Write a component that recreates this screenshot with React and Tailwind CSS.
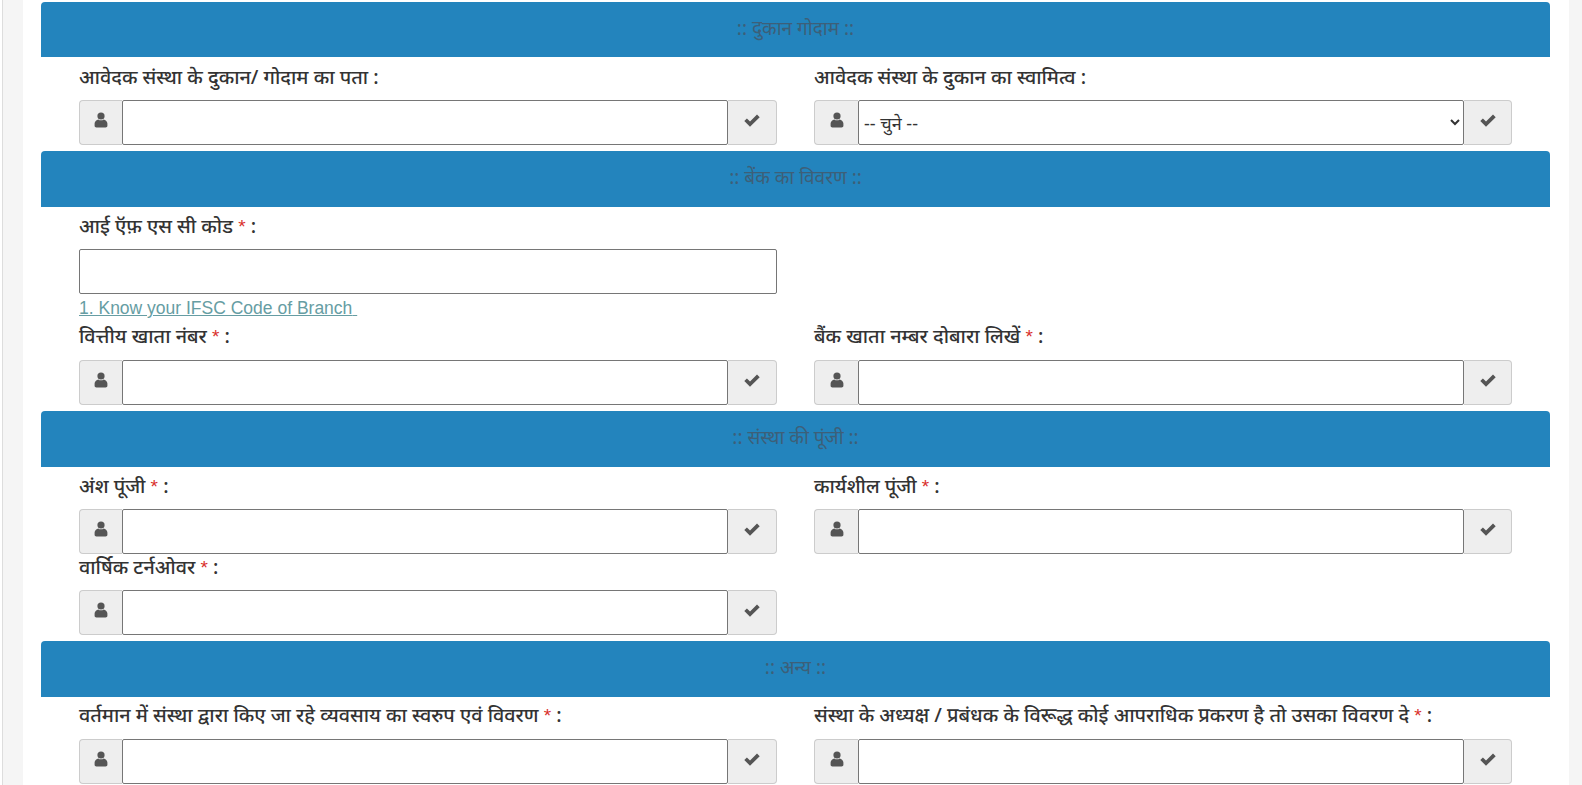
import { useState } from "react";

const deva = "font-['Noto_Sans','Noto_Sans_Devanagari','Lohit_Devanagari',sans-serif]";

function UserIcon() {
  return (
    <svg viewBox="0 0 14 16" className="w-[14px] h-[16px] -mt-[5px] fill-[#555]">
      <circle cx="7" cy="4" r="3.6" />
      <path d="M4.6 7.4 C5.4 8.6 8.6 8.6 9.4 7.4 C11.8 7.8 13.4 9.4 13.4 11.6 L13.4 14 C13.4 14.8 12.6 15.4 11.6 15.4 L2.4 15.4 C1.4 15.4 .6 14.8 .6 14 L.6 11.6 C.6 9.4 2.2 7.8 4.6 7.4 Z" />
    </svg>
  );
}

function CheckIcon() {
  return (
    <svg viewBox="0 0 16 13" className="w-[16px] h-[13px] -mt-[4px] fill-[#555]">
      <path d="M0.3 7 L2.9 4.4 L6 7.5 L13 0.6 L15.7 3.2 L6 12.8 Z" />
    </svg>
  );
}

function SectionHead({ title, first }) {
  return (
    <div className={`${first ? "h-[55px]" : "h-[56px]"} bg-[#2384bd] rounded-t-[4px] flex items-center justify-center pb-[3px] text-[19px] text-[#3d5f78]`}>
      :: {title} ::
    </div>
  );
}

function Label({ text, req }) {
  return (
    <div className="text-[19.8px] font-medium text-[#333] leading-[24px] whitespace-nowrap">
      {text} {req && <span className="text-[19px] text-[#d9302c] font-['Liberation_Sans',sans-serif]">*</span>} :
    </div>
  );
}

function Group({ select, right }) {
  const [val, setVal] = useState("");
  return (
    <div className="flex h-[45px]">
      <span className={`${right ? "w-[44px]" : "w-[43px]"} flex items-center justify-center bg-[#eeeeee] border border-[#ccc] border-r-0 rounded-l-[4px]`}>
        <UserIcon />
      </span>
      {select ? (
        <select className="flex-1 min-w-0 border border-[#767676] bg-white text-[18px] text-[#333] pl-[1px] pr-[6px] rounded-[2px]">
          <option>-- चुने --</option>
        </select>
      ) : (
        <input
          value={val}
          onChange={e => setVal(e.target.value)}
          className="flex-1 min-w-0 border border-[#767676] bg-white rounded-[2px]"
        />
      )}
      <span className={`${right ? "w-[48px]" : "w-[49px]"} flex items-center justify-center bg-[#eeeeee] border border-[#ccc] border-l-0 rounded-r-[4px]`}>
        <CheckIcon />
      </span>
    </div>
  );
}

function Field({ text, req, select, right, top = "pt-[8px] h-[43px]" }) {
  return (
    <div className="w-[698px]">
      <div className={top}>
        <Label text={text} req={req} />
      </div>
      <Group select={select} right={right} />
    </div>
  );
}

export default function App() {
  return (
    <div className={`h-[785px] overflow-hidden bg-white flex ${deva}`}>
      <div className="w-[21px] ml-[2px] bg-[#f5f5f5] border-l border-[#ddd]" />
      <div className="w-[1546px] pt-[2px] pl-[18px] pr-[19px]">
        <SectionHead title="दुकान गोदाम" first />
        <div className="pl-[38px] flex gap-[37px] mb-[6px]">
          <Field text="आवेदक संस्था के दुकान/ गोदाम का पता" />
          <Field text="आवेदक संस्था के दुकान का स्वामित्व" select right />
        </div>

        <SectionHead title="बेंक का विवरण" />
        <div className="pl-[38px] mb-[6px]">
          <div className="w-[698px]">
            <div className="pt-[7px] h-[42px]">
              <Label text="आई ऍफ़ एस सी कोड" req />
            </div>
            <input className="block w-full h-[45px] border border-[#767676] bg-white rounded-[2px]" />
            <a className="block h-[22px] pt-[5px] text-[17.5px] leading-[18px] text-[#669da3] underline font-['Liberation_Sans',sans-serif] whitespace-pre">
              1. Know your IFSC Code of Branch{" "}
            </a>
          </div>
          <div className="flex gap-[37px]">
            <Field text="वित्तीय खाता नंबर" req top="h-[44px] pt-[8px]" />
            <Field text="बैंक खाता नम्बर दोबारा लिखें" req right top="h-[44px] pt-[8px]" />
          </div>
        </div>

        <SectionHead title="संस्था की पूंजी" />
        <div className="pl-[38px] mb-[6px]">
          <div className="flex gap-[37px]">
            <Field text="अंश पूंजी" req top="h-[42px] pt-[7px]" />
            <Field text="कार्यशील पूंजी" req right top="h-[42px] pt-[7px]" />
          </div>
          <Field text="वार्षिक टर्नओवर" req top="h-[36px] pt-[1px]" />
        </div>

        <SectionHead title="अन्य" />
        <div className="pl-[38px] flex gap-[37px]">
          <Field text="वर्तमान में संस्था द्वारा किए जा रहे व्यवसाय का स्वरुप एवं विवरण" req top="h-[42px] pt-[6px]" />
          <Field text="संस्था के अध्यक्ष / प्रबंधक के विरूद्ध कोई आपराधिक प्रकरण है तो उसका विवरण दे" req right top="h-[42px] pt-[6px]" />
        </div>
      </div>
      <div className="flex-1 bg-[#f5f5f5]" />
    </div>
  );
}
